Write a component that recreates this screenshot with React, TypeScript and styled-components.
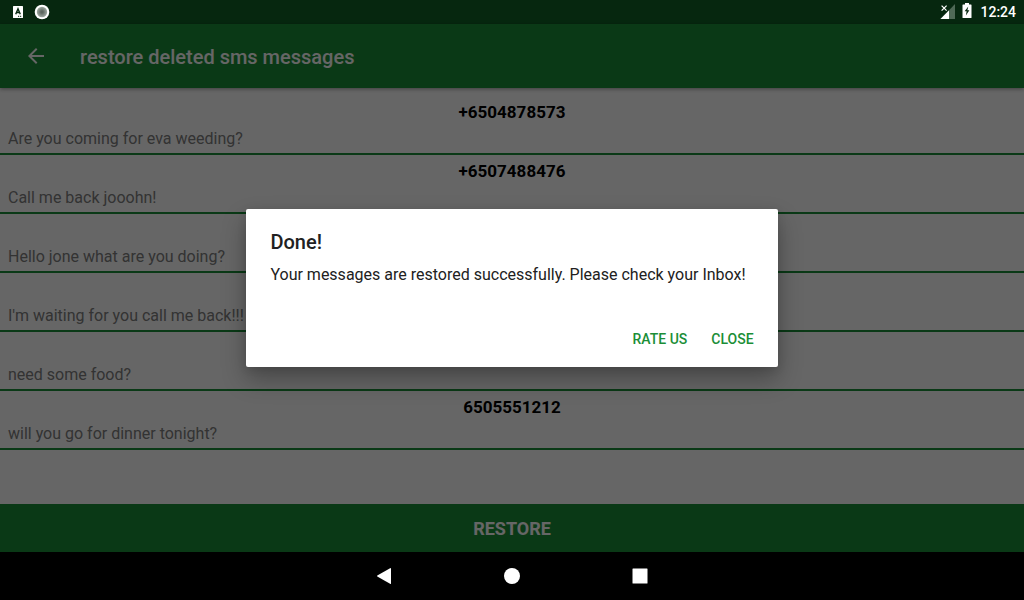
import React from "react";
import styled, { createGlobalStyle } from "styled-components";

const GlobalStyle = createGlobalStyle`
  *, *::before, *::after { box-sizing: border-box; }
  body { margin: 0; background: #000; }
  body, button { font-family: Roboto, "Liberation Sans", sans-serif; }
`;

const Screen = styled.div`
  display: flex;
  flex-direction: column;
  min-height: 100vh;
`;

const StatusBar = styled.header`
  display: flex;
  align-items: center;
  justify-content: space-between;
  height: 24px;
  padding: 0 8px 0 12px;
  background: #06270f;
  color: #fff;
`;

const StatusGroup = styled.div<{ $gap: number }>`
  display: flex;
  align-items: center;
  gap: ${(p) => p.$gap}px;
`;

const Clock = styled.time`
  font-size: 14px;
  font-weight: 500;
  line-height: 24px;
`;

const Content = styled.div`
  position: relative;
  display: flex;
  flex: 1;
  flex-direction: column;
  background: #fff;
`;

const AppBar = styled.div`
  display: flex;
  align-items: center;
  gap: 32px;
  height: 64px;
  padding: 0 24px;
  background: #1b8e37;
  color: #fff;
  box-shadow: 0 1px 4px rgba(0, 0, 0, 0.4);
`;

const BackButton = styled.button`
  display: flex;
  padding: 0;
  border: 0;
  background: none;
  color: inherit;
`;

const AppTitle = styled.h1`
  margin: 0;
  padding-top: 2px;
  font-size: 20px;
  font-weight: 500;
  line-height: 28px;
`;

const MessageList = styled.ul`
  flex: 1;
  margin: 0;
  padding: 8px 0 0;
  list-style: none;
`;

const MessageItem = styled.li`
  padding: 4px 8px;
  border-bottom: 2px solid #1b8e37;
`;

const Sender = styled.div`
  min-height: 24px;
  color: #000;
  font-size: 17px;
  font-weight: 700;
  line-height: 24px;
  text-align: center;
`;

const MessageText = styled.p`
  margin: 0;
  padding-top: 5px;
  color: #808080;
  font-size: 16px;
  line-height: 20px;
`;

const RestoreButton = styled.button`
  width: 100%;
  height: 48px;
  border: 0;
  background: #1b8e37;
  color: #fff;
  font-size: 18px;
  font-weight: 700;
`;

const Scrim = styled.div`
  position: absolute;
  inset: 0;
  display: flex;
  align-items: center;
  justify-content: center;
  background: rgba(0, 0, 0, 0.6);
`;

const Dialog = styled.section`
  width: calc(55% - 32px);
  border-radius: 2px;
  background: #fff;
  color: #212121;
  box-shadow: 0 12px 24px rgba(0, 0, 0, 0.3), 0 2px 8px rgba(0, 0, 0, 0.1);
`;

const DialogTitle = styled.h2`
  margin: 0;
  padding: 19px 24px 0;
  font-size: 20px;
  font-weight: 500;
  line-height: 28px;
`;

const DialogText = styled.p`
  margin: 0;
  padding: 9px 24px 30px;
  font-size: 16px;
  line-height: 20px;
`;

const DialogActions = styled.div`
  display: flex;
  justify-content: flex-end;
  gap: 8px;
  padding: 0 16px 4px;
`;

const TextButton = styled.button`
  height: 48px;
  padding: 0 8px;
  border: 0;
  background: none;
  color: #1b8e37;
  font-size: 14px;
  font-weight: 500;
`;

const NavBar = styled.nav`
  display: flex;
  align-items: center;
  justify-content: center;
  gap: 80px;
  height: 48px;
  background: #000;
`;

const NavButton = styled.button`
  display: flex;
  align-items: center;
  justify-content: center;
  width: 48px;
  height: 48px;
  padding: 0;
  border: 0;
  background: none;
  color: #fff;
`;

const messages = [
  { sender: "+6504878573", text: "Are you coming for eva weeding?" },
  { sender: "+6507488476", text: "Call me back jooohn!" },
  { sender: "", text: "Hello jone what are you doing?" },
  { sender: "", text: "I'm waiting for you call me back!!!" },
  { sender: "", text: "need some food?" },
  { sender: "6505551212", text: "will you go for dinner tonight?" },
];

const KeyboardIcon = () => (
  <svg width="12" height="24" viewBox="0 0 12 24" aria-hidden="true">
    <rect x="1" y="6" width="10" height="12" rx="0.5" fill="#fff" />
    <path d="M3.7 14.2 6 8.800l2.300 5.400M4.600 12.500h2.800" fill="none" stroke="#06270f" strokeWidth="1.4" />
    <path d="M6 16.300h1.200M8 16.300h1.200" stroke="#06270f" strokeWidth="1" />
  </svg>
);

const RecordIcon = () => (
  <svg width="16" height="24" viewBox="0 0 16 24" aria-hidden="true">
    <defs>
      <radialGradient id="lens">
        <stop offset="0.2" stopColor="#5c665f" />
        <stop offset="1" stopColor="#a0aaa3" />
      </radialGradient>
    </defs>
    <circle cx="8" cy="12" r="7.3" fill="#fff" />
    <circle cx="8" cy="12" r="5.2" fill="url(#lens)" />
  </svg>
);

const SignalIcon = () => (
  <svg width="16" height="24" viewBox="0 0 16 24" aria-hidden="true">
    <path d="M15 4v15H9v-8.8z" fill="#4f6956" />
    <path d="M9 10.2V19H.4z" fill="#fff" />
    <path d="m1.600 5.600 5 5m0-5-5 5" stroke="#06270f" strokeWidth="3" />
    <path d="m1.600 5.600 5 5m0-5-5 5" stroke="#fff" strokeWidth="1.200" />
  </svg>
);

const BatteryIcon = () => (
  <svg width="10" height="24" viewBox="0 0 10 24" aria-hidden="true">
    <path d="M3 3h4v1.500h2q.5 0 .5.5v12.500q0 .5-.5.500H1q-.5 0-.5-.5V5q0-.5.500-.5h2z" fill="#fff" />
    <path d="M6.300 6.500 2.600 11.200h2L3.900 15.400 7.400 10.200H5.400z" fill="#06270f" />
  </svg>
);

export default function App() {
  return (
    <>
      <GlobalStyle />
      <Screen>
        <StatusBar>
          <StatusGroup $gap={10}>
            <KeyboardIcon />
            <RecordIcon />
          </StatusGroup>
          <StatusGroup $gap={8}>
            <StatusGroup $gap={6}>
              <SignalIcon />
              <BatteryIcon />
            </StatusGroup>
            <Clock>12:24</Clock>
          </StatusGroup>
        </StatusBar>
        <Content>
          <AppBar>
            <BackButton aria-label="Back">
              <svg width="24" height="24" viewBox="0 0 24 24" fill="currentColor">
                <path d="M20 11H7.830l5.590-5.590L12 4l-8 8 8 8 1.410-1.410L7.830 13H20z" />
              </svg>
            </BackButton>
            <AppTitle>restore deleted sms messages</AppTitle>
          </AppBar>
          <MessageList>
            {messages.map((m) => (
              <MessageItem key={m.text}>
                <Sender>{m.sender}</Sender>
                <MessageText>{m.text}</MessageText>
              </MessageItem>
            ))}
          </MessageList>
          <RestoreButton>RESTORE</RestoreButton>
          <Scrim>
            <Dialog role="dialog" aria-modal="true" aria-labelledby="dialog-title" aria-describedby="dialog-text">
              <DialogTitle id="dialog-title">Done!</DialogTitle>
              <DialogText id="dialog-text">
                Your messages are restored successfully. Please check your Inbox!
              </DialogText>
              <DialogActions>
                <TextButton>RATE US</TextButton>
                <TextButton>CLOSE</TextButton>
              </DialogActions>
            </Dialog>
          </Scrim>
        </Content>
        <NavBar>
          <NavButton aria-label="Back">
            <svg width="16" height="16" viewBox="0 0 16 16" fill="currentColor">
              <path d="M14.500 0q.5 0 .5.5v15q0 .5-.5.5L1.300 8.500q-.6-.5 0-1z" />
            </svg>
          </NavButton>
          <NavButton aria-label="Home">
            <svg width="16" height="16" viewBox="0 0 16 16" fill="currentColor">
              <circle cx="8" cy="8" r="8" />
            </svg>
          </NavButton>
          <NavButton aria-label="Recent apps">
            <svg width="16" height="16" viewBox="0 0 16 16" fill="currentColor">
              <rect x="0.500" y="0.500" width="15" height="15" rx="0.500" />
            </svg>
          </NavButton>
        </NavBar>
      </Screen>
    </>
  );
}
